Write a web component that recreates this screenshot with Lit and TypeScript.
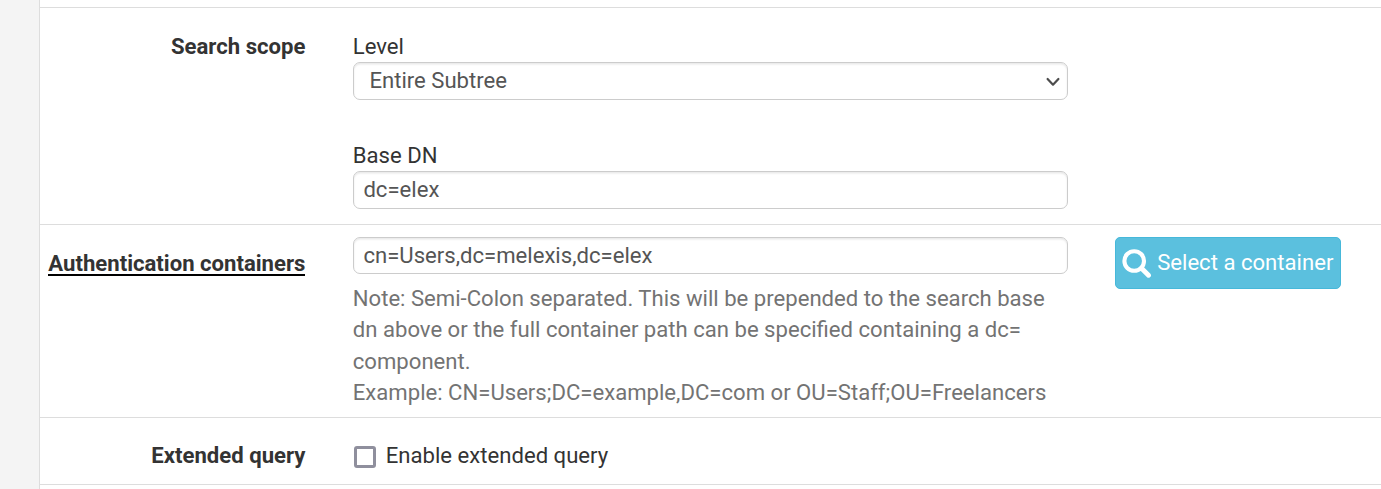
import { LitElement, html, css } from 'lit';
import { customElement, property, state } from 'lit/decorators.js';
import { classMap } from 'lit/directives/class-map.js';

@customElement('form-row')
export class FormRow extends LitElement {
  @property() label = '';
  @property({ type: Boolean }) help = false;

  static styles = css`
  :host {
    display: grid;
    grid-template-columns: 265.4px 715px 226px;
    column-gap: 47.4px;
    box-sizing: border-box;
    border-bottom: 1px solid #ddd;
  }

  .label {
    padding-top: var(--label-top, 22px);
    text-align: right;
    font-weight: 700;
    white-space: nowrap;
  }

  .help {
    display: inline-block;
    line-height: 22px;
    border-bottom: 2px solid #000;
  }
  `;

  render() {
    return html`
        <div class="label"><span class=${classMap({ help: this.help })}>${this.label}</span></div>
        <slot></slot>
        <slot name="action"></slot>
    `;
  }
}

@customElement('app-root')
export class AppRoot extends LitElement {
  @state() extended = false;

  static styles = css`
  :host {
    display: flex;
    height: 489px;
    overflow: hidden;
    box-sizing: border-box;
    background: #f4f4f4;
    color: #333;
    font-family: Roboto, sans-serif;
    font-size: 22.11px;
    line-height: 31.4px;
  }

  .panel {
    flex: 1;
    margin-left: 39px;
    padding-top: 7px;
    border-left: 1px solid #ddd;
    background: #fff;
  }

  .scope {
    height: 218px;
    border-top: 1px solid #ddd;
    --label-top: 23px;
  }

  .containers {
    height: 193px;
    --label-top: 23px;
  }

  .extended {
    height: 67px;
  }

  .fields {
    display: flex;
    flex-direction: column;
    gap: 40px;
    padding-top: 23px;
  }

  .field {
    display: flex;
    flex-direction: column;
    height: 69px;
  }

  .caption {
    height: 31px;
    flex: none;
  }

  .input {
    display: flex;
    align-items: center;
    justify-content: space-between;
    box-sizing: border-box;
    height: 38px;
    flex: none;
    padding: 0 9.6px;
    border: 1px solid #ccc;
    border-radius: 7px;
    background: #fff;
    box-shadow: inset 0 1.5px 2px rgba(0, 0, 0, .09);
    color: #555;
  }

  .select {
    padding: 0 7px 0 15.6px;
  }

  .short {
    height: 37px;
  }

  .chevron {
    width: 14px;
    height: 10px;
    margin-top: 1px;
  }

  .stack {
    padding-top: 12px;
  }

  .note {
    margin-top: 9px;
    color: #737373;
  }

  .button {
    display: flex;
    align-items: center;
    box-sizing: border-box;
    height: 52px;
    margin-top: 12px;
    padding: 0 7px 0 6px;
    border: 1px solid #46b8da;
    border-radius: 5px;
    background: #5bc0de;
    color: #fff;
    font: inherit;
    white-space: nowrap;
  }

  .icon {
    width: 29px;
    height: 29px;
    margin-right: 6px;
    flex: none;
  }

  .check {
    display: flex;
    align-items: center;
    align-self: start;
    padding-top: 22px;
  }

  .checkbox {
    appearance: none;
    box-sizing: border-box;
    width: 22px;
    height: 22px;
    margin: 3px 10px 0 1px;
    border: 3px solid #8f8f9d;
    border-radius: 3px;
    background: #fff;
  }

  .checkbox:checked {
    background: #5bc0de;
  }
  `;

  toggleExtended(e: Event) {
    this.extended = (e.target as HTMLInputElement).checked;
  }

  render() {
    return html`
        <div class="panel">
            <form-row class="scope" label="Search scope">
                <div class="fields">
                    <div class="field">
                        <div class="caption">Level</div>
                        <div class="input select">
                            <span>Entire Subtree</span>
                            <svg class="chevron" viewBox="0 0 14 10" fill="none" stroke="#4c4c4c" stroke-width="2.2" stroke-linecap="round" stroke-linejoin="round">
                                <path d="M1.6 2L7 7.7L12.4 2"/>
                            </svg>
                        </div>
                    </div>
                    <div class="field">
                        <div class="caption">Base DN</div>
                        <div class="input">dc=elex</div>
                    </div>
                </div>
            </form-row>
            <form-row class="containers" label="Authentication containers" help>
                <div class="stack">
                    <div class="input short">cn=Users,dc=melexis,dc=elex</div>
                    <div class="note">
                        Note: Semi-Colon separated. This will be prepended to the search base dn above or the full container path can be specified containing a dc= component.<br>
                        Example: CN=Users;DC=example,DC=com or OU=Staff;OU=Freelancers
                    </div>
                </div>
                <button class="button" slot="action">
                    <svg class="icon" viewBox="0 0 29 29" fill="none" stroke="#fff">
                        <circle cx="12.2" cy="12" r="9.8" stroke-width="4.1"/>
                        <path d="M19.5 19.3l7 7" stroke-width="4.8" stroke-linecap="round"/>
                    </svg>
                    <span>Select a container</span>
                </button>
            </form-row>
            <form-row class="extended" label="Extended query">
                <label class="check">
                    <input class="checkbox" type="checkbox" .checked=${this.extended} @change=${this.toggleExtended}>
                    <span>Enable extended query</span>
                </label>
            </form-row>
        </div>
    `;
  }
}
